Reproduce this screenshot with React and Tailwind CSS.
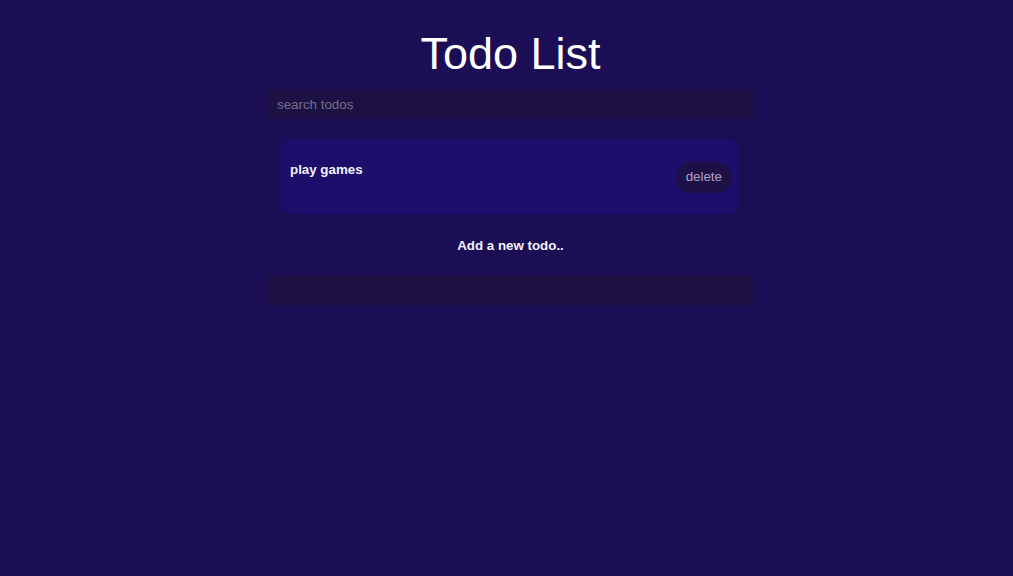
import React, { useState } from "react";

const App = () => {
  const [todos] = useState([{ id: 1, text: "play games" }]);

  return (
    <div
      className="min-h-screen w-full bg-[#1b0e54] flex justify-center pl-2"
      style={{ fontFamily: '"Liberation Sans", Arial, sans-serif' }}
    >
      <div className="w-[487px] flex flex-col">
        {/* HEADER */}
        <h1 className="text-center text-white text-[45px] leading-none mt-[31px] mb-[13px]">
          Todo List
        </h1>

        {/* SEARCH */}
        <input
          type="text"
          placeholder="search todos"
          className="h-[30px] w-full bg-[#1d1043] px-[10px] text-[13.33px] text-white placeholder:text-[#74708c] outline-none"
        />

        {/* LIST */}
        <ul className="mt-[20px] ml-[13px] w-[459px]">
          {todos.map((t) => (
            <li
              key={t.id}
              className="h-[75px] bg-[#1c0e6a] rounded-[12px] flex justify-between pl-[10px] pr-[8px]"
            >
              <span className="text-[13.33px] font-bold text-[#f4f2fb] mt-[21px]">
                {t.text}
              </span>
              <button className="self-center mt-[1px] h-[31px] px-[9px] rounded-[14px] bg-[#1d1045] text-[13.33px] text-[#aca2cc]">
                delete
              </button>
            </li>
          ))}
        </ul>

        {/* ADD */}
        <p className="text-center text-[13.33px] font-bold text-[#f4f2fb] mt-[22px]">
          Add a new todo..
        </p>
        <input
          type="text"
          className="mt-[19px] h-[30px] w-full bg-[#1d1043] px-[10px] text-[13.33px] text-white outline-none"
        />
      </div>
    </div>
  );
};

export default App;
